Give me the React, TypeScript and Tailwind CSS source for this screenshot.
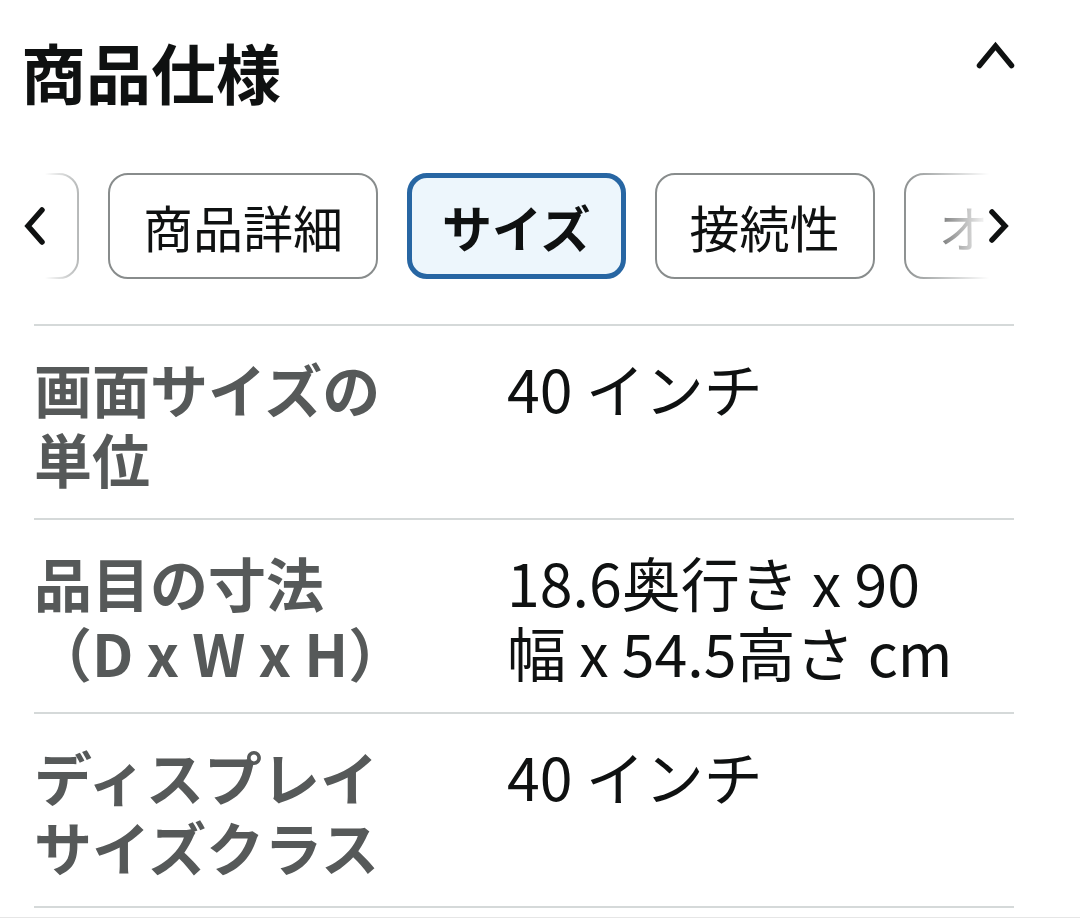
import React from "react";

const rows: { label: string[]; value: string[] }[] = [
  { label: ["画面サイズの", "単位"], value: ["40 インチ"] },
  { label: ["品目の寸法", "（D x W x H）"], value: ["18.6奥行き x 90", "幅 x 54.5高さ cm"] },
  { label: ["ディスプレイ", "サイズクラス"], value: ["40 インチ"] },
];

export default function App() {
  return (
    <div className="w-[1080px] h-[919px] bg-white overflow-hidden font-['Noto_Sans_CJK_JP','Noto_Sans',sans-serif] text-[#0f1111]">
      {/* Header */}
      <div className="flex items-start justify-between pl-[21px] pr-[62px] pt-[31px]">
        <h1 className="text-[65px] leading-[80px] font-bold text-[#0f1111]">商品仕様</h1>
        <svg width="44" height="30" viewBox="0 0 44 30" className="mt-[10px]" fill="none">
          <polyline points="5.5,24.5 21.5,5 37.5,24.5" stroke="#0f1111" strokeWidth="5.5" strokeLinecap="round" strokeLinejoin="miter" />
        </svg>
      </div>

      {/* Tabs */}
      <div className="relative mt-[62px] w-[1014px] h-[106px] overflow-hidden">
        <div className="flex gap-[29px] ml-[-91px] h-full">
          <button className="shrink-0 h-[106px] px-[33px] rounded-[20px] border-2 border-[#888c8c] bg-white text-[50px] leading-none text-[#0f1111]">
            概要
          </button>
          <button className="shrink-0 h-[106px] px-[33px] rounded-[20px] border-2 border-[#888c8c] bg-white text-[50px] leading-none text-[#0f1111]">
            商品詳細
          </button>
          <button className="shrink-0 h-[106px] px-[30px] rounded-[20px] border-[5px] border-[#2766a3] bg-[#edf6fc] text-[50px] leading-none font-bold text-[#0f1111]">
            サイズ
          </button>
          <button className="shrink-0 h-[106px] px-[33px] rounded-[20px] border-2 border-[#888c8c] bg-white text-[50px] leading-none text-[#0f1111]">
            接続性
          </button>
          <button className="shrink-0 h-[106px] px-[33px] rounded-[20px] border-2 border-[#888c8c] bg-white text-[50px] leading-none text-[#0f1111]">
            オーディオ
          </button>
        </div>
        <div className="absolute left-0 top-0 h-full w-[100px] bg-[linear-gradient(to_right,#ffffff_45%,rgba(255,255,255,0)_100%)]">
          <svg width="24" height="40" viewBox="0 0 24 40" className="absolute left-[23px] top-[33px]" fill="none">
            <polyline points="19,4 5,20 19,36" stroke="#0f1111" strokeWidth="5.5" strokeLinecap="round" strokeLinejoin="miter" />
          </svg>
        </div>
        <div className="absolute right-0 top-0 h-full w-[114px] bg-[linear-gradient(to_right,rgba(255,255,255,0)_0%,#ffffff_78%)]">
          <svg width="24" height="36" viewBox="0 0 24 36" className="absolute left-[87px] top-[35px]" fill="none">
            <polyline points="5,4 18,18 5,32" stroke="#0f1111" strokeWidth="5.5" strokeLinecap="round" strokeLinejoin="miter" />
          </svg>
        </div>
      </div>

      {/* Table */}
      <div className="mt-[45px] mx-[34px] w-[980px] border-b-2 border-[#d5d9d9]">
        {rows.map((r, i) => (
          <div key={i} className="flex border-t-2 border-[#d5d9d9] pt-[27px] pb-[25px]">
            <div className="w-[473px] shrink-0 text-[58px] leading-[70px] font-bold text-[#565959]">
              {r.label.map((l, j) => (
                <div key={j} className="whitespace-nowrap">{l}</div>
              ))}
            </div>
            <div className="flex-1 text-[59px] leading-[70px] text-[#0f1111]">
              {r.value.map((v, j) => (
                <div key={j} className="whitespace-nowrap">{v}</div>
              ))}
            </div>
          </div>
        ))}
      </div>
      <div className="mt-[9px] h-px w-full bg-[#e6e6e6]" />
    </div>
  );
}
